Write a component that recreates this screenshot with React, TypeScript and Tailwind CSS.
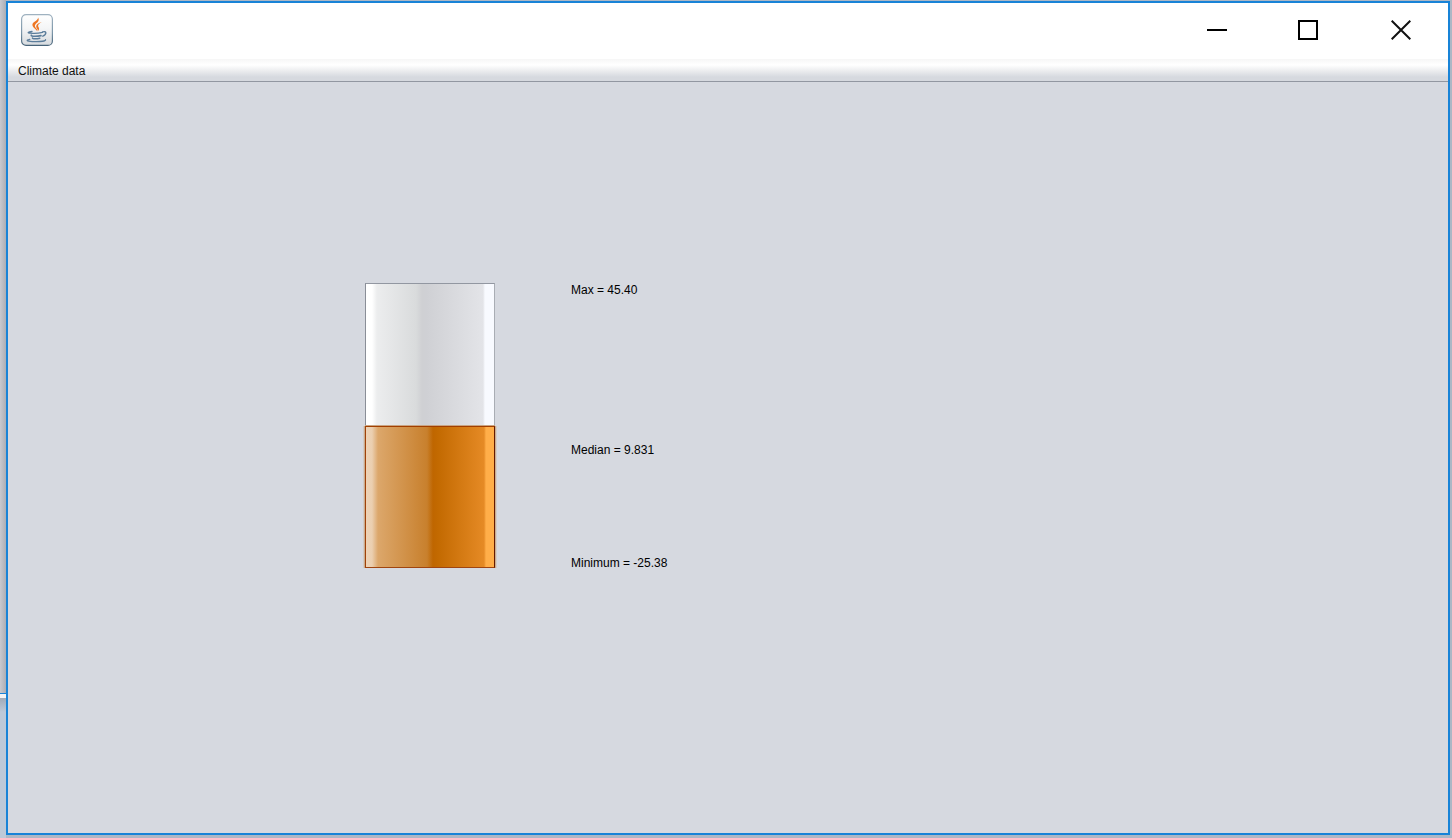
import React from "react";

function JavaIcon() {
  return (
    <svg width="32" height="32" viewBox="0 0 32 32" role="img" aria-label="Java">
      <defs>
        <linearGradient id="tile" x1="0" y1="0" x2="0" y2="1">
          <stop offset="0" stopColor="#ffffff" />
          <stop offset="0.45" stopColor="#f4f5f6" />
          <stop offset="1" stopColor="#d6dade" />
        </linearGradient>
        <linearGradient id="rim" x1="0" y1="0" x2="0" y2="1">
          <stop offset="0" stopColor="#9fb2c0" />
          <stop offset="0.6" stopColor="#7b95a8" />
          <stop offset="1" stopColor="#48647a" />
        </linearGradient>
      </defs>
      <rect x="0.6" y="0.6" width="30.800" height="30.800" rx="4.500" fill="url(#tile)" stroke="url(#rim)" strokeWidth="1.200" />
      <g fill="#ee7623">
        <path d="M17 3.500c1.900 2.900-.4 4.800-2.300 6.500-1.600 1.600-.7 3.100.8 4.700.5.500.9 1.300.7 2.500-1.100-2.100-4.700-3.700-4.800-6.500 0-3 5.900-3.900 5.600-7.200z" />
        <path d="M20.800 8.300c-2.300 1-3.900 2.200-3.700 3.700.2 1.500 2.300 2.600-.2 5.300.2-2-1.700-2.900-1.700-4.700 0-2.400 2.700-3.900 5.600-4.300z" />
      </g>
      <g fill="none" stroke="#5b7d9b" strokeLinecap="round">
        <path d="M11 17.500c-4.300.4-5 1.400-1.800 1.700 3.600.3 8.800.1 12.300-.8" strokeWidth="1.300" />
        <path d="M21.700 17.800c4-1.100 4.300 2.300.1 4.400" strokeWidth="1.400" />
        <path d="M10.300 21.200c-.6 1.400 5.800 1.300 9.700.4" strokeWidth="1.600" />
        <path d="M11.500 24c-.3 1.100 4.300 1.100 7.300.2" strokeWidth="1.500" />
        <path d="M8.800 25.400c-5 .9-2.300 2.100 5 2.200 6 .1 11.200-.4 10.700-1.900" strokeWidth="1.300" />
      </g>
    </svg>
  );
}

function TitleBar() {
  return (
    <header className="flex h-14 shrink-0 items-center justify-between bg-white pb-0.5 pl-[13px]">
      <JavaIcon />
      <div className="flex h-full items-center">
        <button type="button" aria-label="Minimize" className="flex h-full w-[91px] items-center justify-center">
          <svg width="20" height="20" viewBox="0 0 20 20">
            <path d="M0 9h20v2H0z" fill="#000" />
          </svg>
        </button>
        <button type="button" aria-label="Maximize" className="flex h-full w-[92px] items-center justify-center">
          <svg width="20" height="20" viewBox="0 0 20 20">
            <rect x="1" y="1" width="18" height="18" fill="none" stroke="#000" strokeWidth="2" />
          </svg>
        </button>
        <button type="button" aria-label="Close" className="flex h-full w-[94px] items-center justify-center">
          <svg width="20" height="20" viewBox="0 0 20 20">
            <path d="M0.700 0.700l18.600 18.600M19.300 0.700L0.700 19.300" stroke="#111" strokeWidth="2" />
          </svg>
        </button>
      </div>
    </header>
  );
}

function MenuBar() {
  return (
    <nav className="flex h-[23px] shrink-0 items-end border-b border-[#9297a1] bg-[linear-gradient(to_bottom,#f6f6f6_0px,#ffffff_6px,#eeeff1_11px,#d6d9df_18px,#d6d9df_22px)] px-[10px] pb-0.5">
      <button type="button" className="leading-4 text-[#111]">
        Climate data
      </button>
    </nav>
  );
}

function RangeBar() {
  return (
    <div role="img" aria-label="Temperature range" className="flex w-[130px] flex-col">
      <div className="h-[143px] border border-b-0 border-t-[#9297a1] border-l-[#8a8e97] border-r-[#a9adb4] bg-[linear-gradient(to_right,#ffffff_0px,#ffffff_6px,#ecedee_11px,#d9dbdc_50px,#cfd0d3_56px,#cfd0d4_60px,#e3e4e8_117px,#f8faff_119px,#f8faff_128px)]" />
      <div className="h-[142px] border border-t-[#a23e00] border-r-[#631900] border-b-[#a04510] border-l-[#a04208] bg-[linear-gradient(to_right,#eed3b6_0px,#ebcfb0_6px,#dca76b_12px,#c8802d_61px,#bf6600_67px,#c26900_71px,#e58a25_118px,#ffae49_120px,#ffae49_128px)] shadow-[0_-1px_0_#c9a583,1px_0_0_#c8ab8f,-1px_0_0_#c8ab8f,2px_0_0_#d3cbc6,-2px_0_0_#d3cbc6]" />
    </div>
  );
}

export default function App() {
  return (
    <div className="flex min-h-screen bg-[#adb7c5] font-['Liberation_Sans',Arial,sans-serif] text-xs text-black">
      <div aria-hidden="true" className="flex w-[6px] shrink-0 flex-col">
        <div className="h-[693px] bg-linear-to-r from-[#c8c9cf] to-[#acaeb5]" />
        <div className="h-px bg-[#1883d7]" />
        <div className="h-1 bg-[#f3f3f3]" />
        <div className="grow bg-linear-to-b from-[#a0aab8] to-[#bdc9d8] to-10%" />
      </div>
      <div className="flex grow flex-col pt-px pr-0.5 pb-[3px]">
        <div className="flex grow flex-col border-2 border-[#1883d7] bg-[#d6d9e0]">
          <TitleBar />
          <MenuBar />
          <main className="flex grow items-start gap-[76px] pt-[201px] pl-[357px]">
            <RangeBar />
            <div className="flex flex-col leading-[14px]">
              <p>Max = 45.40</p>
              <p className="mt-[146px]">Median = 9.831</p>
              <p className="mt-[99px]">Minimum = -25.38</p>
            </div>
          </main>
        </div>
      </div>
    </div>
  );
}
